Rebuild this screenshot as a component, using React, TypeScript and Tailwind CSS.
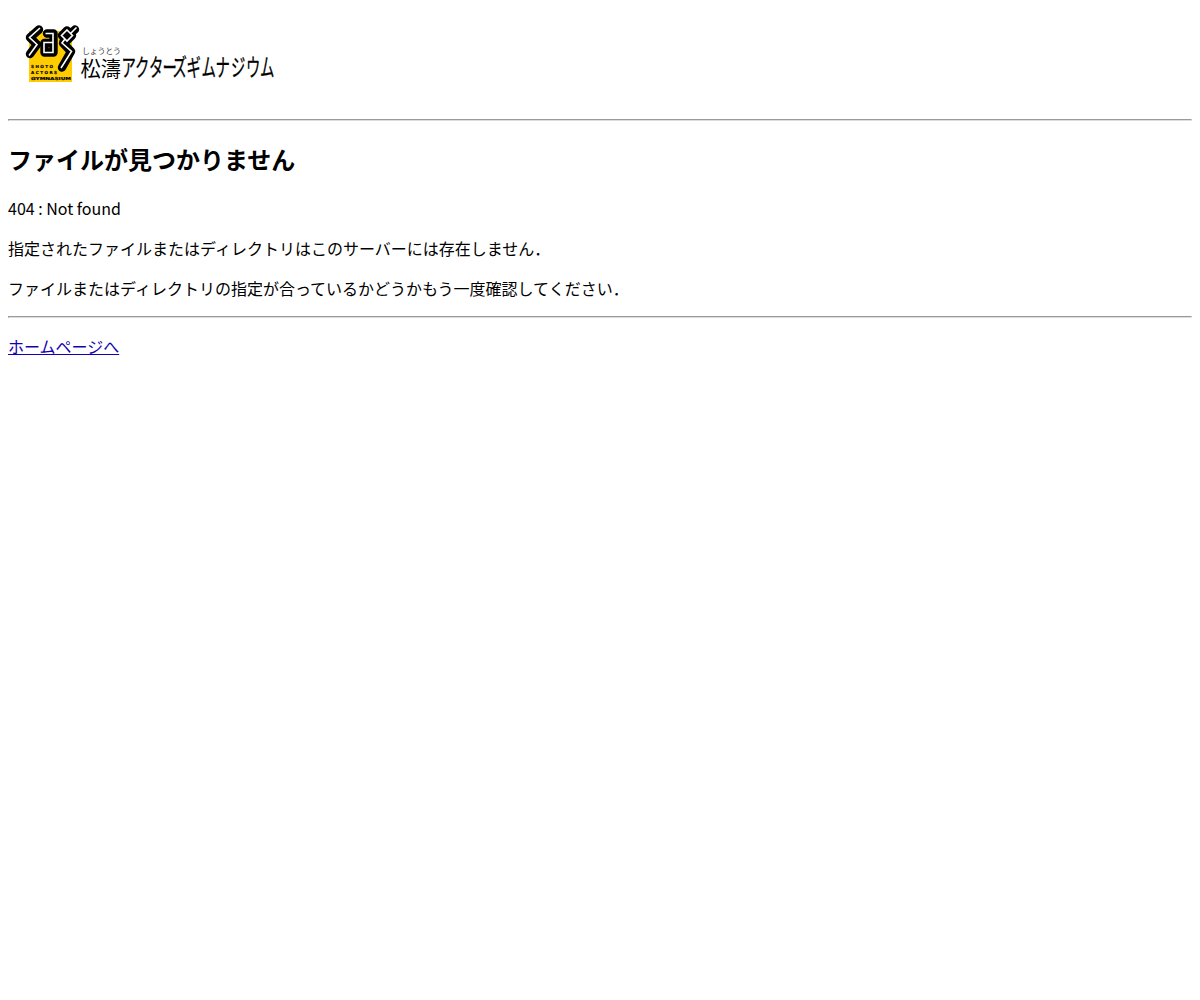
const KANA = "アクターズギムナジウム";
const KANA_X = [121.5, 135, 149, 162.5, 172.5, 186.5, 201.5, 215.5, 231, 246, 260];

function Logo() {
  return (
    <svg width="300" height="103" viewBox="8 8 300 103" className="block" role="img">
      <rect x="29" y="31" width="43" height="51" fill="#fc0" />
      <g fill="none" strokeLinecap="round" strokeLinejoin="round">
        <g stroke="#000" strokeWidth="8.4">
          <path d="M39 29.5L30 37.5L37 44.5L30 54" />
          <path d="M47 33.5H53.5V52.5H44.5V43H53" />
          <path d="M75 29.5L70 34M67 30.5L72 35.5L67 40.5L62 35.5ZM64 40L63 43L71 51.5L62 67.5" />
        </g>
        <g stroke="#fff" strokeWidth="1.6" strokeLinecap="butt" strokeLinejoin="miter">
          <path d="M40 28L29.5 37.5L37 44.5L29 55.5" />
          <path d="M45.5 33.5H53V52.5H44V42.5H53" />
          <path d="M76.5 27.5L71 33M67 30L72.5 35.5L67 41L61.5 35.5ZM65 39L62 43L71.5 51.5L61 68" />
        </g>
      </g>
      <g className="font-['DejaVu_Sans'] font-bold" fontSize="4.1" stroke="#000" strokeWidth="0.2">
        <text x="31" y="67.9" textLength="22">SHOTO</text>
        <text x="31" y="73.9" textLength="26">ACTORS</text>
        <text x="31" y="79.9" textLength="40" lengthAdjust="spacingAndGlyphs">GYMNASIUM</text>
      </g>
      <g className="font-['Noto_Sans_CJK_JP',sans-serif]">
        <text x="82" y="53.5" fontSize="8" textLength="39" fill="#444">しょうとう</text>
        <text x="80.5" y="75.5" fontSize="21" textLength="40.5" lengthAdjust="spacingAndGlyphs">松濤</text>
        <text
          y="76"
          fontSize="24"
          stroke="#000"
          strokeWidth="0.3"
          transform="scale(0.6 1)"
          x={KANA_X.map((x) => x / 0.6).join(" ")}
        >
          {KANA}
        </text>
      </g>
    </svg>
  );
}

function Rule() {
  return <hr className="h-[2px] border border-[#9a9a9a] border-r-[#eee] border-b-[#ddd]" />;
}

export default function App() {
  return (
    <div className="min-h-screen bg-white p-2 font-['Noto_Sans_CJK_JP',sans-serif] text-base leading-6 text-black">
      <Logo />
      <div className="mt-2">
        <Rule />
      </div>
      <h2 className="mt-5 mb-[19px] text-2xl leading-9 font-bold">ファイルが見つかりません</h2>
      <div className="space-y-4">
        <p>404 : Not found</p>
        <p>指定されたファイルまたはディレクトリはこのサーバーには存在しません．</p>
        <p>ファイルまたはディレクトリの指定が合っているかどうかもう一度確認してください．</p>
        <Rule />
        <p>
          <a href="#" className="text-[#1400b4] underline">
            ホームページへ
          </a>
        </p>
      </div>
    </div>
  );
}
